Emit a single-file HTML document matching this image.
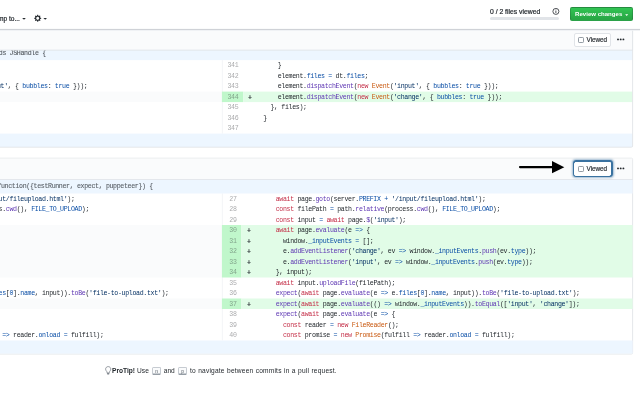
<!DOCTYPE html>
<html><head><meta charset="utf-8"><style>
html,body{margin:0;padding:0;background:#fff}
#r{position:relative;width:640px;height:400px;overflow:hidden;background:#fff;font-family:"Liberation Sans",sans-serif}
.abs,.code,.num,.mk,.hunk,.btn,.dots,.ring,.pt{position:absolute}
.code,.num,.mk,.hunk{font-family:"Liberation Mono",monospace;font-size:6.6px;letter-spacing:-0.34px;line-height:10.5px;height:10.5px;white-space:pre;color:#24292e}
.code,.mk{padding-top:1.5px}
.mk{-webkit-text-stroke:0.18px #24292e;padding-top:2px}
.code,.num,.mk,.hunk,.tb,.pt{will-change:transform}
.num{text-align:right;color:rgba(27,31,35,.4);padding-top:1.1px}
.hunk{color:#51575d;line-height:8px;height:8px;-webkit-text-stroke:0.1px currentColor}
.k{color:#c42f48} .f{color:#5e37b3} .c{color:#0a4ea6} .s{color:#032f62} .v{color:#c95a12}
.tb{position:absolute;color:#24292e;white-space:pre}
.rc{position:absolute;box-sizing:border-box;border:0.5px solid rgba(27,31,35,.2);border-radius:2px;background:linear-gradient(-180deg,#31c453 0%,#28a745 90%)}
.kbd{display:inline-block;box-sizing:border-box;width:9.4px;height:7.9px;text-align:center;margin:0 0.3px 0 1.0px;font-family:"Liberation Mono",monospace;font-size:4.5px;line-height:7px;padding:0;border:0.5px solid #c6cbd1;border-bottom-color:#959da5;border-radius:1.5px;box-shadow:inset 0 -0.5px 0 #959da5;background:#fafbfc;color:#444d56;vertical-align:middle}
.btn{box-sizing:border-box;background:#fff;border:1px solid #e1e4e8;border-radius:2px}
.cb{position:absolute;left:2.7px;top:3.2px;width:6.2px;height:6.2px;border:0.7px solid #959da5;border-radius:1.2px;box-sizing:border-box;background:#fff}
.vt{position:absolute;left:11.2px;top:-0.2px;font-size:6.4px;letter-spacing:-0.05px;line-height:13px;color:#24292e;-webkit-text-stroke:0.15px #24292e}
.dots{font-size:10px;font-weight:bold;color:#1b1f23;line-height:6px;letter-spacing:-0.9px}
.ring{box-sizing:border-box;border:2px solid #3a72a0;border-radius:3px;box-shadow:0 0 2px 0.9px rgba(58,114,160,.45)}
</style></head>
<body><div id="r">
<svg class="abs" style="left:0;top:0" width="640" height="400">
<path d="M0,46.1 H633.1 V146.7 q0,1 -1.2,1 H0 Z" fill="#fff"/>
<rect x="0.00" y="46.10" width="632.60" height="14.00" fill="#edf6ff" />
<rect x="221.90" y="60.10" width="0.60" height="73.50" fill="#eceef1" />
<rect x="0.00" y="91.60" width="221.90" height="10.50" fill="#fafbfc" />
<rect x="221.90" y="91.60" width="21.35" height="10.50" fill="#c0f7cb" />
<rect x="243.25" y="91.60" width="389.35" height="10.50" fill="#e1fce7" />
<rect x="0.00" y="133.60" width="632.60" height="13.40" fill="#edf6ff" />
<path d="M0,147.2 H631.4 q1.2,0 1.2,-1.2 V0" fill="none" stroke="#e1e4e8" stroke-width="0.9"/>
<!-- file 2 -->
<path d="M0,158.2 H631.4 q1.2,0 1.2,1.2 V352.8 q0,1.2 -1.2,1.2 H0" fill="none" stroke="#e1e4e8" stroke-width="0.9"/>
<rect x="0.00" y="158.65" width="632.15" height="20.35" fill="#fafbfc" />
<rect x="0.00" y="179.00" width="632.60" height="0.90" fill="#e1e4e8" />
<rect x="0.00" y="179.90" width="632.60" height="13.60" fill="#edf6ff" />
<rect x="221.90" y="193.50" width="0.60" height="147.00" fill="#eceef1" />
<rect x="0.00" y="225.00" width="221.90" height="52.50" fill="#fafbfc" />
<rect x="221.90" y="225.00" width="19.50" height="52.50" fill="#c0f7cb" />
<rect x="241.40" y="225.00" width="391.20" height="52.50" fill="#e1fce7" />
<rect x="0.00" y="298.50" width="221.90" height="10.50" fill="#fafbfc" />
<rect x="221.90" y="298.50" width="19.50" height="10.50" fill="#c0f7cb" />
<rect x="241.40" y="298.50" width="391.20" height="10.50" fill="#e1fce7" />
<rect x="0.00" y="340.50" width="632.60" height="13.05" fill="#edf6ff" />
</svg>
<div class="hunk" style="left:-164.36px;top:50.30px">@@ -335,6 +335,7 @@ class ElementHandle extends JSHandle {</div>
<div class="code" style="left:-155.35px;top:59.20px">      }</div>
<div class="num" style="left:221.90px;top:60.10px;width:16.35px">341</div>
<div class="code" style="left:256.05px;top:59.20px">      }</div>
<div class="code" style="left:-155.35px;top:69.70px">      element.<span class=c>files</span> <span class=c>=</span> dt.<span class=c>files</span>;</div>
<div class="num" style="left:221.90px;top:70.60px;width:16.35px">342</div>
<div class="code" style="left:256.05px;top:69.70px">      element.<span class=c>files</span> <span class=c>=</span> dt.<span class=c>files</span>;</div>
<div class="code" style="left:-155.35px;top:80.20px">      element.<span class=f>dispatchEvent</span>(<span class=k>new</span> <span class=v>Event</span>(<span class=s>&#x27;input&#x27;</span>, { <span class=c>bubbles</span>: <span class=c>true</span> }));</div>
<div class="num" style="left:221.90px;top:81.10px;width:16.35px">343</div>
<div class="code" style="left:256.05px;top:80.20px">      element.<span class=f>dispatchEvent</span>(<span class=k>new</span> <span class=v>Event</span>(<span class=s>&#x27;input&#x27;</span>, { <span class=c>bubbles</span>: <span class=c>true</span> }));</div>
<div class="mk" style="left:248.45px;top:91.60px">+</div>
<div class="num" style="left:221.90px;top:91.60px;width:16.35px">344</div>
<div class="code" style="left:256.05px;top:90.70px">      element.<span class=f>dispatchEvent</span>(<span class=k>new</span> <span class=v>Event</span>(<span class=s>&#x27;change&#x27;</span>, { <span class=c>bubbles</span>: <span class=c>true</span> }));</div>
<div class="code" style="left:-155.35px;top:101.20px">    }, files);</div>
<div class="num" style="left:221.90px;top:102.10px;width:16.35px">345</div>
<div class="code" style="left:256.05px;top:101.20px">    }, files);</div>
<div class="code" style="left:-155.35px;top:111.70px">  }</div>
<div class="num" style="left:221.90px;top:112.60px;width:16.35px">346</div>
<div class="code" style="left:256.05px;top:111.70px">  }</div>
<div class="code" style="left:-155.35px;top:122.20px"></div>
<div class="num" style="left:221.90px;top:123.10px;width:16.35px">347</div>
<div class="code" style="left:256.05px;top:122.20px"></div>

<!-- file1 header (sticky) -->
<svg class="abs" style="left:0;top:0" width="640" height="52">
<rect x="0.00" y="0.00" width="640.00" height="29.00" fill="#fff" />
<rect x="0.00" y="29.60" width="632.60" height="20.20" fill="#fafbfc" />
<rect x="0.00" y="49.70" width="632.60" height="0.90" fill="#e1e4e8" />
<rect x="632.15" y="29.00" width="0.90" height="21.50" fill="#e1e4e8" />
<rect x="0.00" y="28.90" width="640.00" height="1.10" fill="#cfd2d7" />
<rect x="0.00" y="30.00" width="640.00" height="0.80" fill="#eef0f3" />
</svg>
<div class="btn" style="left:574.4px;top:32.5px;width:36.9px;height:14px"><span class="cb"></span><span class="vt">Viewed</span></div>
<svg class="abs" style="left:615px;top:36px" width="12" height="7"><circle cx="3.0" cy="3.4" r="0.95" fill="#24292e"/><circle cx="5.7" cy="3.4" r="0.95" fill="#24292e"/><circle cx="8.4" cy="3.4" r="0.95" fill="#24292e"/></svg>

<!-- toolbar -->
<div class="tb" style="right:620px;top:13.5px;-webkit-text-stroke:0.2px #24292e;font-size:6.6px;line-height:10px">Jump to...</div>
<svg class="abs" style="left:0;top:0" width="60" height="29">
 <polygon points="22.2,18.0 25.8,18.0 24.0,19.8" fill="#24292e"/>
 <polygon points="43.4,18.0 47,18.0 45.2,19.8" fill="#24292e"/>
 <path transform="translate(34.2,14.3) scale(0.5)" d="M14 8.77v-1.6l-1.94-.64-.45-1.09.88-1.84-1.13-1.13-1.81.91-1.09-.45-.69-1.92h-1.6l-.63 1.940-1.11.45-1.84-.88-1.13 1.13.91 1.81-.45 1.09L0 7.23v1.59l1.94.64.45 1.09-.88 1.840 1.13 1.13 1.81-.91 1.09.45.69 1.92h1.59l.63-1.94 1.11-.45 1.84.88 1.13-1.13-.92-1.81.47-1.09L14 8.75v.02zM7 11c-1.66 0-3-1.34-3-3s1.34-3 3-3 3 1.34 3 3-1.34 3-3 3z" fill="#24292e"/>
</svg>
<div class="tb" style="left:489.7px;top:7.2px;font-size:6.8px;line-height:10px;-webkit-text-stroke:0.2px #24292e">0 / 2 files viewed</div>
<div class="abs" style="left:489.7px;top:16.9px;width:69px;height:3px;border-radius:1.5px;background:#e1e4e8"></div>
<svg class="abs" style="left:552px;top:8px" width="8" height="7"><circle cx="3.9" cy="3.4" r="3" fill="none" stroke="#24292e" stroke-width="0.8"/><rect x="3.5" y="2.8" width="0.8" height="2.2" fill="#24292e"/><rect x="3.5" y="1.6" width="0.8" height="0.7" fill="#24292e"/></svg>
<div class="rc" style="left:569.5px;top:7px;width:63.7px;height:14px"><span style="position:absolute;left:4.6px;top:-0.8px;line-height:14px;font-size:6.07px;font-weight:bold;color:#fff">Review changes</span><svg style="position:absolute;left:54.4px;top:5.6px" width="5" height="3"><polygon points="0.2,0.3 3.2,0.3 1.7,2.0" fill="#fff"/></svg></div>

<!-- file 2 -->
<div class="hunk" style="left:-169.30px;top:183.40px;color:#5a6067">@@ -24,14 +24,17 @@ module.exports.addTests = function({testRunner, expect, puppeteer}) {</div>
<div class="code" style="left:-157.20px;top:192.70px">      <span class=k>await</span> page.<span class=f>goto</span>(server.<span class=c>PREFIX</span> <span class=c>+</span> <span class=s>&#x27;/input/fileupload.html&#x27;</span>);</div>
<div class="num" style="left:221.90px;top:193.50px;width:14.50px">27</div>
<div class="code" style="left:254.20px;top:192.70px">      <span class=k>await</span> page.<span class=f>goto</span>(server.<span class=c>PREFIX</span> <span class=c>+</span> <span class=s>&#x27;/input/fileupload.html&#x27;</span>);</div>
<div class="code" style="left:-157.20px;top:203.20px">      <span class=k>const</span> filePath <span class=c>=</span> path.<span class=f>relative</span>(process.<span class=f>cwd</span>(), <span class=c>FILE_TO_UPLOAD</span>);</div>
<div class="num" style="left:221.90px;top:204.00px;width:14.50px">28</div>
<div class="code" style="left:254.20px;top:203.20px">      <span class=k>const</span> filePath <span class=c>=</span> path.<span class=f>relative</span>(process.<span class=f>cwd</span>(), <span class=c>FILE_TO_UPLOAD</span>);</div>
<div class="code" style="left:-157.20px;top:213.70px">      <span class=k>const</span> input <span class=c>=</span> <span class=k>await</span> page.<span class=f>$</span>(<span class=s>&#x27;input&#x27;</span>);</div>
<div class="num" style="left:221.90px;top:214.50px;width:14.50px">29</div>
<div class="code" style="left:254.20px;top:213.70px">      <span class=k>const</span> input <span class=c>=</span> <span class=k>await</span> page.<span class=f>$</span>(<span class=s>&#x27;input&#x27;</span>);</div>
<div class="mk" style="left:246.60px;top:225.00px">+</div>
<div class="num" style="left:221.90px;top:225.00px;width:14.50px">30</div>
<div class="code" style="left:254.20px;top:224.20px">      <span class=k>await</span> page.<span class=f>evaluate</span>(e <span class=c>=&gt;</span> {</div>
<div class="mk" style="left:246.60px;top:235.50px">+</div>
<div class="num" style="left:221.90px;top:235.50px;width:14.50px">31</div>
<div class="code" style="left:254.20px;top:234.70px">        window.<span class=c>_inputEvents</span> <span class=c>=</span> [];</div>
<div class="mk" style="left:246.60px;top:246.00px">+</div>
<div class="num" style="left:221.90px;top:246.00px;width:14.50px">32</div>
<div class="code" style="left:254.20px;top:245.20px">        e.<span class=f>addEventListener</span>(<span class=s>&#x27;change&#x27;</span>, ev <span class=c>=&gt;</span> window.<span class=c>_inputEvents</span>.<span class=f>push</span>(ev.<span class=c>type</span>));</div>
<div class="mk" style="left:246.60px;top:256.50px">+</div>
<div class="num" style="left:221.90px;top:256.50px;width:14.50px">33</div>
<div class="code" style="left:254.20px;top:255.70px">        e.<span class=f>addEventListener</span>(<span class=s>&#x27;input&#x27;</span>, ev <span class=c>=&gt;</span> window.<span class=c>_inputEvents</span>.<span class=f>push</span>(ev.<span class=c>type</span>));</div>
<div class="mk" style="left:246.60px;top:267.00px">+</div>
<div class="num" style="left:221.90px;top:267.00px;width:14.50px">34</div>
<div class="code" style="left:254.20px;top:266.20px">      }, input);</div>
<div class="code" style="left:-157.20px;top:276.70px">      <span class=k>await</span> input.<span class=f>uploadFile</span>(filePath);</div>
<div class="num" style="left:221.90px;top:277.50px;width:14.50px">35</div>
<div class="code" style="left:254.20px;top:276.70px">      <span class=k>await</span> input.<span class=f>uploadFile</span>(filePath);</div>
<div class="code" style="left:-157.20px;top:287.20px">      <span class=f>expect</span>(<span class=k>await</span> page.<span class=f>evaluate</span>(e <span class=c>=&gt;</span> e.<span class=c>files</span>[<span class=c>0</span>].<span class=c>name</span>, input)).<span class=f>toBe</span>(<span class=s>&#x27;file-to-upload.txt&#x27;</span>);</div>
<div class="num" style="left:221.90px;top:288.00px;width:14.50px">36</div>
<div class="code" style="left:254.20px;top:287.20px">      <span class=f>expect</span>(<span class=k>await</span> page.<span class=f>evaluate</span>(e <span class=c>=&gt;</span> e.<span class=c>files</span>[<span class=c>0</span>].<span class=c>name</span>, input)).<span class=f>toBe</span>(<span class=s>&#x27;file-to-upload.txt&#x27;</span>);</div>
<div class="mk" style="left:246.60px;top:298.50px">+</div>
<div class="num" style="left:221.90px;top:298.50px;width:14.50px">37</div>
<div class="code" style="left:254.20px;top:297.70px">      <span class=f>expect</span>(<span class=k>await</span> page.<span class=f>evaluate</span>(() <span class=c>=&gt;</span> window.<span class=c>_inputEvents</span>)).<span class=f>toEqual</span>([<span class=s>&#x27;input&#x27;</span>, <span class=s>&#x27;change&#x27;</span>]);</div>
<div class="code" style="left:-157.20px;top:308.20px">      <span class=f>expect</span>(<span class=k>await</span> page.<span class=f>evaluate</span>(e <span class=c>=&gt;</span> {</div>
<div class="num" style="left:221.90px;top:309.00px;width:14.50px">38</div>
<div class="code" style="left:254.20px;top:308.20px">      <span class=f>expect</span>(<span class=k>await</span> page.<span class=f>evaluate</span>(e <span class=c>=&gt;</span> {</div>
<div class="code" style="left:-157.20px;top:318.70px">        <span class=k>const</span> reader <span class=c>=</span> <span class=k>new</span> <span class=v>FileReader</span>();</div>
<div class="num" style="left:221.90px;top:319.50px;width:14.50px">39</div>
<div class="code" style="left:254.20px;top:318.70px">        <span class=k>const</span> reader <span class=c>=</span> <span class=k>new</span> <span class=v>FileReader</span>();</div>
<div class="code" style="left:-157.20px;top:329.20px">        <span class=k>const</span> promise <span class=c>=</span> <span class=k>new</span> <span class=v>Promise</span>(fulfill <span class=c>=&gt;</span> reader.<span class=c>onload</span> <span class=c>=</span> fulfill);</div>
<div class="num" style="left:221.90px;top:330.00px;width:14.50px">40</div>
<div class="code" style="left:254.20px;top:329.20px">        <span class=k>const</span> promise <span class=c>=</span> <span class=k>new</span> <span class=v>Promise</span>(fulfill <span class=c>=&gt;</span> reader.<span class=c>onload</span> <span class=c>=</span> fulfill);</div>

<!-- arrow -->
<svg class="abs" style="left:0;top:0" width="640" height="400">
 <line x1="520" y1="167.1" x2="553" y2="167.1" stroke="#000" stroke-width="2.2" stroke-linecap="round"/>
 <polygon points="552,161.1 564.3,167.2 552,173.3" fill="#000"/>
</svg>
<div class="ring" style="left:573px;top:160px;width:40px;height:17.3px"></div>
<div class="btn" style="left:574.4px;top:162px;width:36.9px;height:13.5px;border-color:#fff"><span class="cb" style="top:3.0px"></span><span class="vt" style="top:-0.6px">Viewed</span></div>
<svg class="abs" style="left:615px;top:165.3px" width="12" height="7"><circle cx="3.0" cy="3.4" r="0.95" fill="#24292e"/><circle cx="5.7" cy="3.4" r="0.95" fill="#24292e"/><circle cx="8.4" cy="3.4" r="0.95" fill="#24292e"/></svg>

<!-- protip -->
<svg class="abs" style="left:104.6px;top:366px" width="7" height="9"><path d="M3.2,0.6 C1.6,0.6 0.6,1.8 0.6,3.1 C0.6,4.2 1.3,4.8 1.8,5.6 C2.0,6.0 2.1,6.4 2.1,7.0 H4.3 C4.3,6.4 4.4,6.0 4.6,5.6 C5.1,4.8 5.8,4.2 5.8,3.1 C5.8,1.8 4.8,0.6 3.2,0.6 Z M2.3,7.6 H4.1 V8.1 H2.3 Z" fill="none" stroke="#586069" stroke-width="0.6"/></svg>
<div class="pt" style="left:112.3px;top:365px;font-size:6.6px;line-height:12px;color:#24292e;white-space:pre;word-spacing:0.3px"><b style="color:#24292e">ProTip!</b> Use <span class="kbd">n</span> and <span class="kbd">p</span><span style="letter-spacing:0.2px"> to navigate between commits in a pull request.</span></div>
</div></body></html>
